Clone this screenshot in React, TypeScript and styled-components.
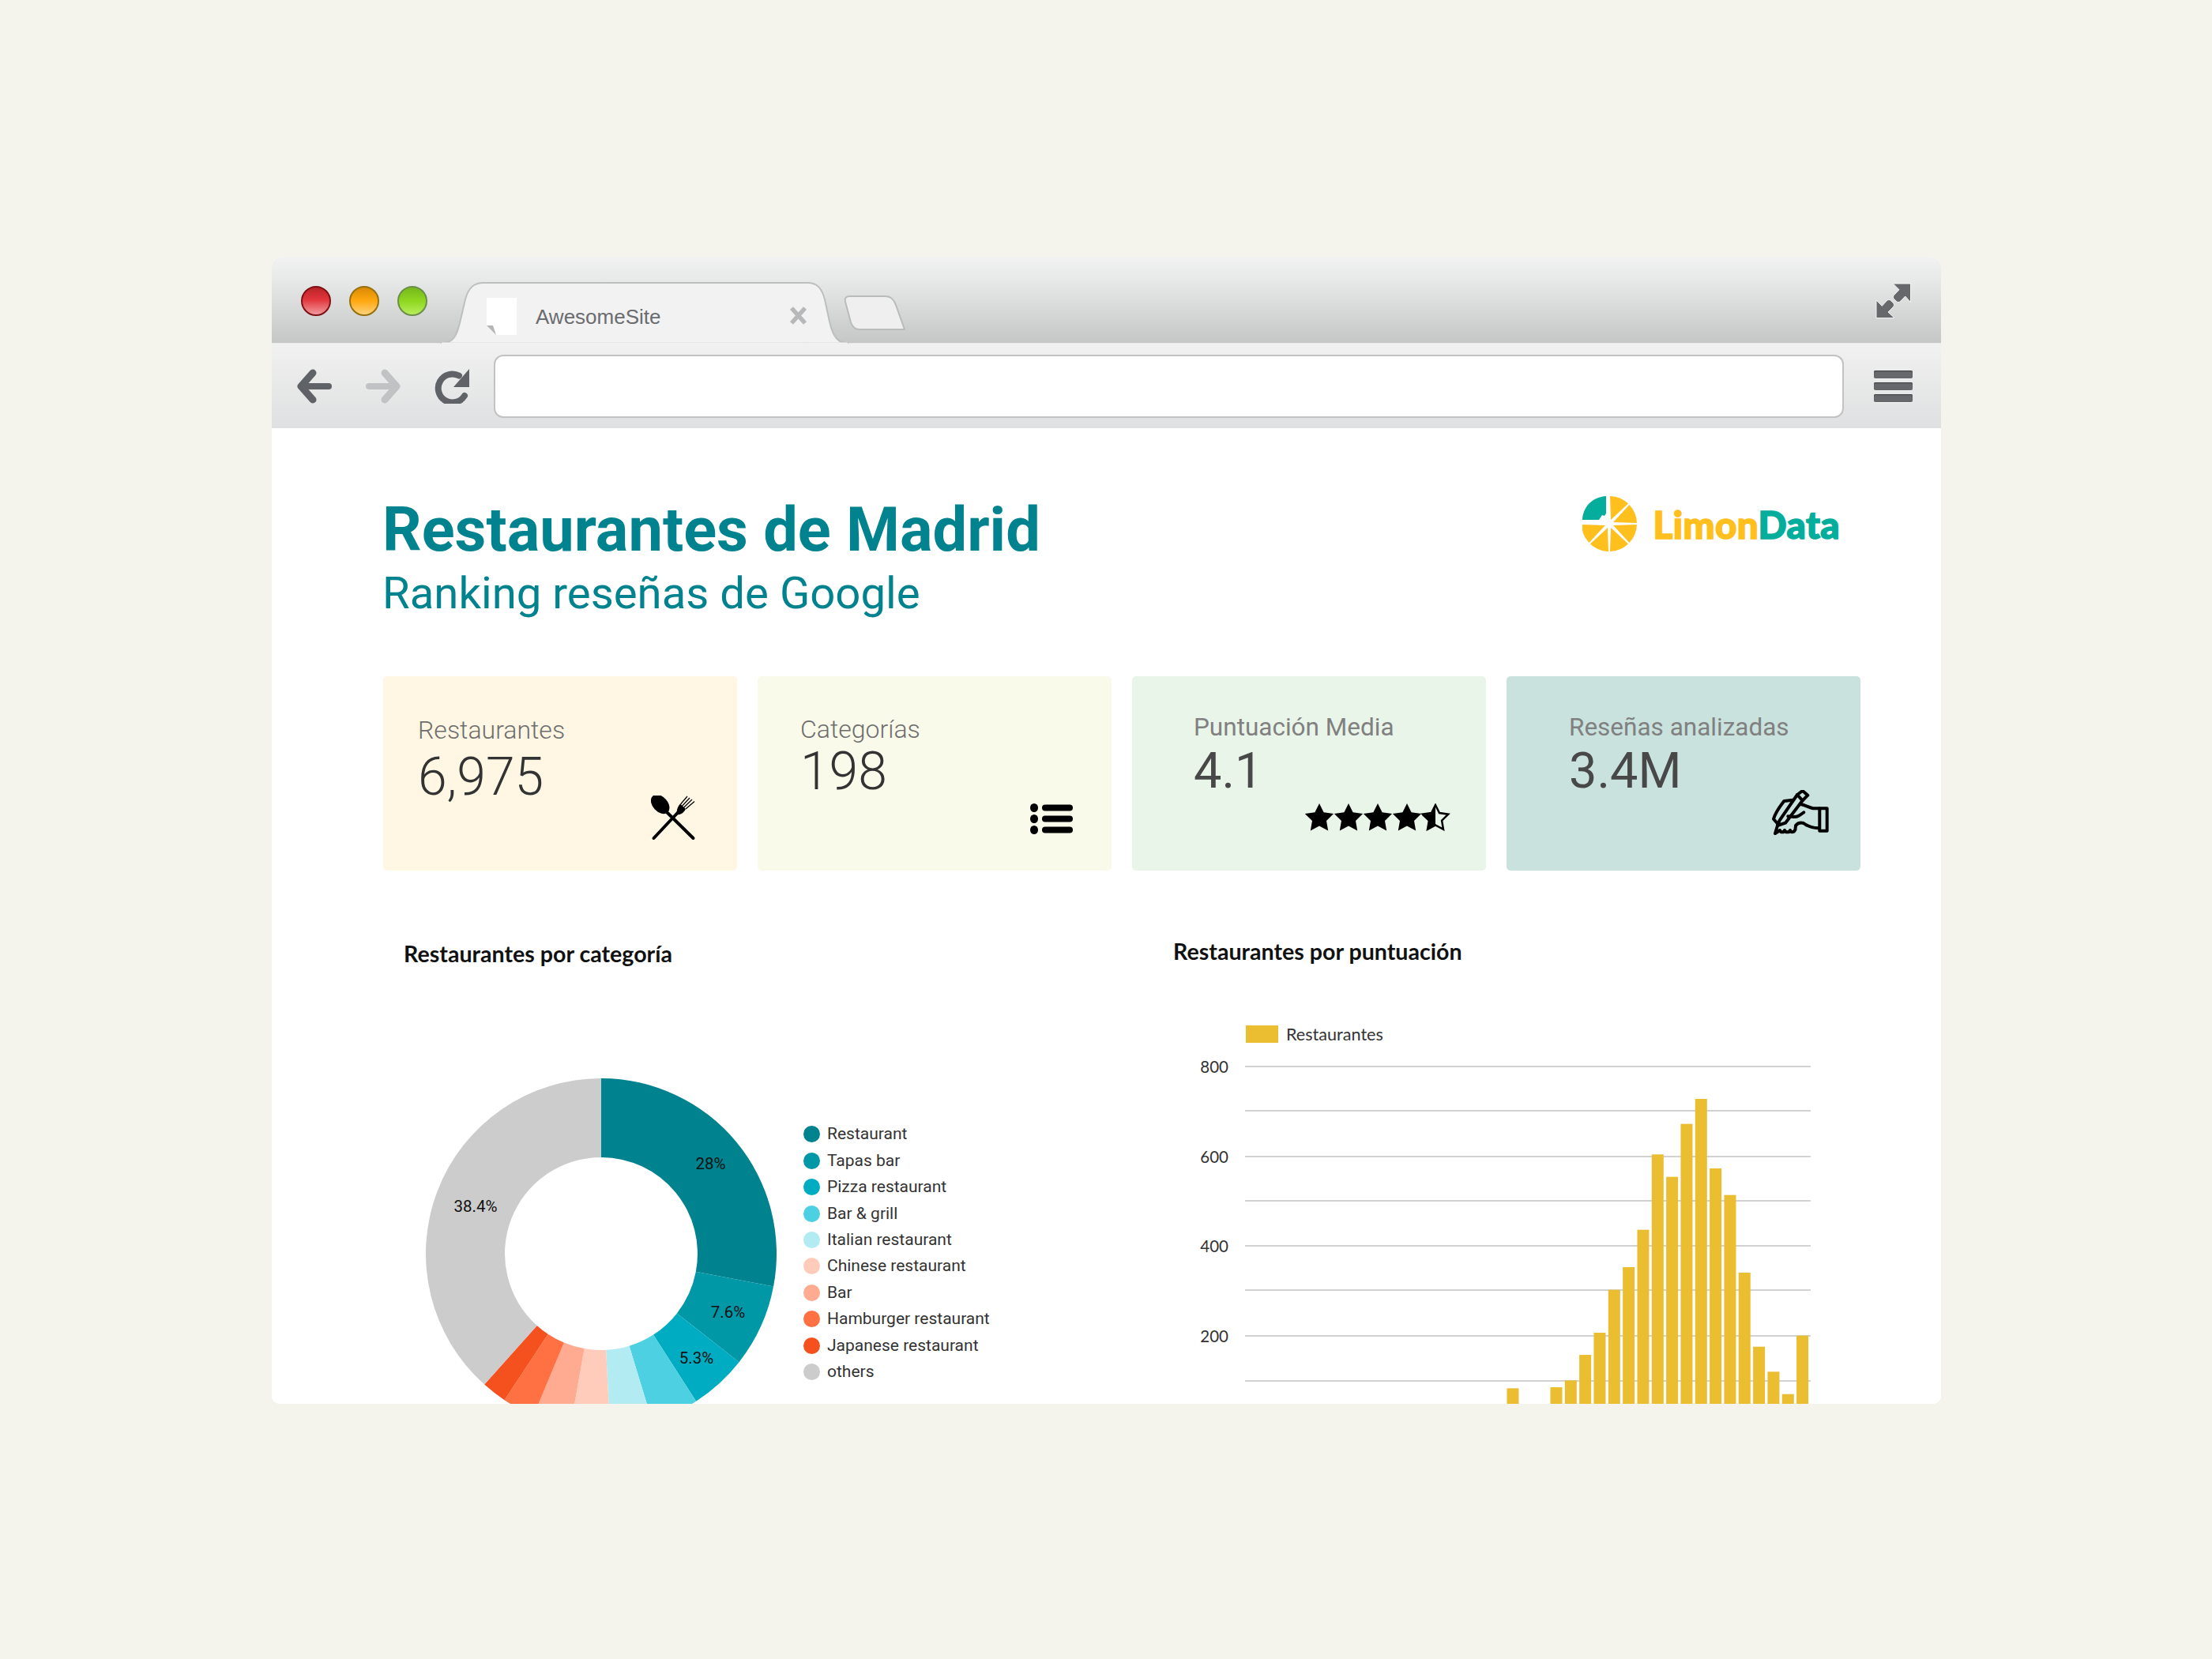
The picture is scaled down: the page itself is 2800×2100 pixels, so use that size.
import React from 'react';
import styled, { createGlobalStyle } from 'styled-components';

const Global = createGlobalStyle`
  html, body { margin: 0; padding: 0; background: #f4f4ec; }
  body { font-family: "Roboto", "Liberation Sans", sans-serif; }
`;

const Page = styled.div`
  width: 2800px;
  height: 2100px;
  padding-top: 325px;
  box-sizing: border-box;
  overflow: hidden;
`;
const Win = styled.div`
  width: 2113px;
  height: 1452px;
  margin-left: 344px;
  border-radius: 14px 14px 10px 10px;
  overflow: hidden;
  background: #fff;
  display: flex;
  flex-direction: column;
`;
const TitleBar = styled.div`
  height: 110px;
  flex: none;
  display: flex;
  align-items: flex-end;
  padding: 0 37px;
  background: linear-gradient(#f2f2f2, #e6e7e7 30%, #c5c7c7);
  border-bottom: 1px solid #e9e9e9;
  box-sizing: border-box;
`;
const Lights = styled.div`
  display: flex;
  gap: 23px;
  align-self: flex-start;
  margin-top: 37px;
`;
const colours = {
  red: { fill: 'linear-gradient(#b8242a, #e2363c 45%, #f09a9d)', rim: '#7f1015' },
  amber: { fill: 'linear-gradient(#d98a05, #ffa811 50%, #ffd27a)', rim: '#96700f' },
  green: { fill: 'linear-gradient(#76b81c, #8ed71f 50%, #b8ee5a)', rim: '#6c8e4a' },
};
const Light = styled.span<{ $c: keyof typeof colours }>`
  width: 38px;
  height: 38px;
  box-sizing: border-box;
  border-radius: 50%;
  background: ${(p) => colours[p.$c].fill};
  border: 2px solid ${(p) => colours[p.$c].rim};
`;
const Tab = styled.div`
  position: relative;
  width: 516px;
  height: 78px;
  margin-left: 17px;
  margin-bottom: -1px;
  flex: none;
  display: flex;
  align-items: center;
  color: #6a6c6f;
`;
const TabShape = styled.svg`
  position: absolute;
  inset: 0;
`;
const Favicon = styled.svg`
  position: relative;
  margin-left: 58px;
  margin-top: 9px;
  flex: none;
`;
const TabLabel = styled.span`
  position: relative;
  margin-left: 24px;
  margin-top: 11px;
  font: 400 26px "Liberation Sans", sans-serif;
`;
const TabClose = styled.svg`
  position: relative;
  margin-left: auto;
  margin-right: 52px;
  margin-top: 6px;
`;
const NewTab = styled.svg`
  flex: none;
  margin-left: -6px;
  margin-bottom: 16px;
`;
const Spacer = styled.div`
  flex: 1;
`;
const Expand = styled.svg`
  flex: none;
  align-self: flex-start;
  margin-top: 33px;
`;
const ToolBar = styled.div`
  height: 107px;
  flex: none;
  display: flex;
  align-items: center;
  padding: 0 36px 0 32px;
  box-sizing: border-box;
  background: linear-gradient(#f1f1f1, #dfe0e1);
`;
const NavIcon = styled.svg<{ $ml: number }>`
  flex: none;
  margin-left: ${(p) => p.$ml}px;
`;
const Address = styled.div`
  height: 80px;
  flex: 1;
  margin: 0 38px 0 31px;
  box-sizing: border-box;
  background: #fff;
  border: 2px solid #c2c2c2;
  border-radius: 12px;
`;
const Burger = styled.div`
  width: 49px;
  flex: none;
  display: flex;
  flex-direction: column;
  gap: 5px;
`;
const BurgerBar = styled.span`
  height: 10px;
  border-radius: 2px;
  background: #66686c;
  box-shadow: inset 0 1px 1px #3d3f42, 0 1px 0 #f5f5f5;
`;
const Content = styled.main`
  flex: 1;
  overflow: hidden;
  padding: 0 102px 0 141px;
  background: #fff;
`;
const Header = styled.header`
  height: 314px;
  display: flex;
  justify-content: space-between;
  align-items: flex-start;
`;
const Titles = styled.div`
  padding-top: 85px;
  margin-left: -1px;
`;
const H1 = styled.h1`
  margin: 0;
  font: 700 77.6px/88px "Roboto", sans-serif;
  color: #00838f;
`;
const H2 = styled.h2`
  margin: 0;
  font: 400 56.3px/73px "Roboto", sans-serif;
  color: #00838f;
`;
const Logo = styled.div`
  display: flex;
  align-items: center;
  gap: 19px;
  margin-top: 86px;
  margin-right: 26px;
`;
const LogoText = styled.span`
  font: 900 47.5px/60px "Lato", sans-serif;
  -webkit-text-stroke: 1.6px currentColor;
  letter-spacing: 0.4px;
`;
const Yellow = styled.span`
  color: #ffc01e;
`;
const Teal = styled.span`
  color: #05ae9c;
`;
const Cards = styled.section`
  display: grid;
  grid-template-columns: repeat(4, 448px);
  column-gap: 26px;
`;
const Card = styled.div<{ $bg: string; $pt: number; $pl: number; $pr: number }>`
  height: 246px;
  box-sizing: border-box;
  border-radius: 5px;
  background: ${(p) => p.$bg};
  padding: ${(p) => `${p.$pt}px ${p.$pr}px 0 ${p.$pl}px`};
  display: flex;
  flex-direction: column;
`;
const CardLabel = styled.div<{ $size: number; $w: number }>`
  font-family: "Roboto", sans-serif;
  font-weight: ${(p) => p.$w};
  font-size: ${(p) => p.$size}px;
  line-height: 42px;
  color: ${(p) => (p.$w === 300 ? '#6e6e6e' : '#808080')};
`;
const CardValue = styled.div<{ $size: number; $lh: number; $w: number }>`
  font-family: "Roboto", sans-serif;
  font-weight: ${(p) => p.$w};
  font-size: ${(p) => p.$size}px;
  line-height: ${(p) => p.$lh}px;
  color: ${(p) => (p.$w === 300 ? '#333' : '#484848')};
`;
const CardIcon = styled.svg<{ $mt: number }>`
  margin-top: ${(p) => p.$mt}px;
  align-self: flex-end;
  flex: none;
`;
const Charts = styled.section`
  display: grid;
  grid-template-columns: 1000px 1fr;
  margin-top: 90px;
`;
const Panel = styled.div<{ $pl: number; $mt: number }>`
  padding-left: ${(p) => p.$pl}px;
  margin-top: ${(p) => p.$mt}px;
`;
const ChartTitle = styled.h3`
  margin: 0;
  font: 700 28.6px/30px "Lato", sans-serif;
  color: #111;
`;
const DonutRow = styled.div`
  display: flex;
  align-items: flex-start;
  margin-top: 143px;
  padding-left: 28px;
`;
const Legend = styled.ul`
  list-style: none;
  margin: 54px 0 0 34px;
  padding: 0;
`;
const LegendItem = styled.li`
  height: 33.45px;
  display: flex;
  align-items: center;
  gap: 9px;
  font: 400 21px/1 "Roboto", sans-serif;
  color: #333;
`;
const Dot = styled.span<{ $c: string }>`
  width: 21px;
  height: 21px;
  border-radius: 50%;
  background: ${(p) => p.$c};
  flex: none;
`;
const BarSvg = styled.svg`
  display: block;
  margin-top: 70px;
`;
const Label = styled.text`
  font: 400 20.5px "Roboto", sans-serif;
  fill: #111;
`;
const Axis = styled.text<{ $size: number }>`
  font-family: "Lato", sans-serif;
  font-size: ${(p) => p.$size}px;
  fill: #333;
`;

const polar = (r: number, a: number, cx = 0, cy = 0) => {
  const t = ((a - 90) * Math.PI) / 180;
  return [cx + r * Math.cos(t), cy + r * Math.sin(t)];
};
const ringPath = (R: number, r: number, a0: number, a1: number) => {
  const [x0, y0] = polar(R, a0);
  const [x1, y1] = polar(R, a1);
  const [x2, y2] = polar(r, a1);
  const [x3, y3] = polar(r, a0);
  const big = a1 - a0 > 180 ? 1 : 0;
  return `M${x0} ${y0}A${R} ${R} 0 ${big} 1 ${x1} ${y1}L${x2} ${y2}A${r} ${r} 0 ${big} 0 ${x3} ${y3}Z`;
};

const slices: [string, string, number][] = [
  ['Restaurant', '#00838f', 28],
  ['Tapas bar', '#0097a7', 7.6],
  ['Pizza restaurant', '#00acc1', 5.3],
  ['Bar & grill', '#4dd0e1', 4.4],
  ['Italian restaurant', '#b2ebf2', 3.9],
  ['Chinese restaurant', '#ffccbc', 3.6],
  ['Bar', '#ffab91', 3.5],
  ['Hamburger restaurant', '#ff7043', 3],
  ['Japanese restaurant', '#f4511e', 2.3],
  ['others', '#cccccc', 38.4],
];

function Donut() {
  let acc = 0;
  return (
    <svg width={444} height={444} viewBox="-222 -222 444 444" style={{ flex: 'none', overflow: 'visible' }}>
      {slices.map(([n, c, v]) => {
        const a0 = (acc / 100) * 360;
        acc += v;
        return <path key={n} d={ringPath(222, 122, a0, (acc / 100) * 360)} fill={c} />;
      })}
      <Label x={138.5} y={-107} textAnchor="middle">28%</Label>
      <Label x={160.5} y={81} textAnchor="middle">7.6%</Label>
      <Label x={120.5} y={139} textAnchor="middle">5.3%</Label>
      <Label x={-159} y={-53} textAnchor="middle">38.4%</Label>
    </svg>
  );
}

const bars: [number, number][] = [
  [0, 1432], [3, 1428], [4, 1402], [5, 1305], [6, 1221], [7, 1058], [8, 972], [9, 830], [10, 544], [11, 629],
  [12, 428], [13, 333], [14, 597], [15, 698], [16, 993], [17, 1274], [18, 1369], [19, 1454], [20, 1232],
];
const gridY = [1351, 1407, 1465, 1521, 1578, 1634, 1692, 1749];

function BarChart() {
  return (
    <BarSvg width={830} height={520} viewBox="1486 1290 830 520">
      <rect x={1578} y={1299} width={41} height={22} fill="#ebbd30" />
      <Axis $size={21.6} x={1629} y={1318}>Restaurantes</Axis>
      {gridY.map((y) => (
        <line key={y} x1={1577} x2={2293} y1={y} y2={y} stroke="#d2d2d2" strokeWidth={2} />
      ))}
      {[[800, 1351], [600, 1465], [400, 1578], [200, 1692]].map(([t, y]) => (
        <Axis $size={20.5} key={t} x={1556} y={y + 8} textAnchor="end">{t}</Axis>
      ))}
      {bars.map(([i, top]) => (
        <rect key={i} x={1908.5 + i * 18.33} y={1281 + top / 3} width={15} height={560} fill="#ebbd30" />
      ))}
    </BarSvg>
  );
}

function LogoIcon() {
  const w = [0, 45, 90, 135, 180, 225];
  const cx = 34, cy = 35;
  const sector = (a0: number, a1: number) => {
    const [x0, y0] = polar(35, a0 + 1.6, cx, cy);
    const [x1, y1] = polar(35, a1 - 1.6, cx, cy);
    const [mx, my] = polar(5.5, (a0 + a1) / 2, cx, cy);
    return `M${mx} ${my}L${x0} ${y0}A35 35 0 0 1 ${x1} ${y1}Z`;
  };
  return (
    <svg width={71} height={71} viewBox="0 0 71 71">
      {w.map((a) => (
        <path key={a} d={sector(a, a + 45)} fill="#ffc01e" />
      ))}
      <path d="M30 0 V22 L28 25 L25 24 L21 30 H0 C1 13 13 1 30 0Z" fill="#05ae9c" />
    </svg>
  );
}

const star = (cx: number, cy: number, R: number) => {
  const p: string[] = [];
  for (let i = 0; i < 10; i++) {
    const r = i % 2 ? R * 0.5 : R;
    const [x, y] = polar(r, i * 36, cx, cy);
    p.push(`${x.toFixed(1)},${y.toFixed(1)}`);
  }
  return p.join(' ');
};

export default function App() {
  return (
    <>
      <Global />
      <Page>
        <Win>
          <TitleBar>
            <Lights>
              <Light $c="red" />
              <Light $c="amber" />
              <Light $c="green" />
            </Lights>
            <Tab>
              <TabShape width={516} height={78} viewBox="0 0 516 78">
                <path
                  d="M0 77.5 C16 77.5 20 68 24 52 L31 22 C35 7 42 1 54 1 L464 1 C476 1 482 7 486 22 L492 50 C496 68 502 77.5 516 77.5 Z"
                  fill="#f2f2f2"
                  stroke="#bdbfbf"
                  strokeWidth={2}
                />
                <path d="M1 78 H515" stroke="#f2f2f2" strokeWidth={3} />
              </TabShape>
              <Favicon width={38} height={47} viewBox="0 0 38 47">
                <path d="M0 0H38V47H12L0 35Z" fill="#fff" />
                <path d="M0 35H8L12 47Z" fill="#b5b5b5" />
              </Favicon>
              <TabLabel>AwesomeSite</TabLabel>
              <TabClose width={23} height={23} viewBox="0 0 23 23">
                <path d="M3 2L20 21M20 2L3 21" stroke="#b7b8b9" strokeWidth={5.5} />
              </TabClose>
            </Tab>
            <NewTab width={78} height={44} viewBox="0 0 78 44">
              <path
                d="M2 8 C1 3 3 1 8 1 L52 1 C60 1 63 5 66 12 L77 43 L20 43 C14 43 11 40 9 34 Z"
                fill="#efefef"
                stroke="#b9bbbb"
                strokeWidth={2}
              />
            </NewTab>
            <Spacer />
            <Expand width={46} height={46} viewBox="0 0 46 46">
              <g fill="#66686c" stroke="#f4f4f4" strokeWidth={1}>
                <path d="M44.5 1V24.5L37.7 17L32 23C30 25 28 25 26 23L24 21C22 19 22 17 24 15L30 8.7L22.3 1Z" />
                <path d="M1 22V44.5H24L16 37L22 31C24 29 24 27 22 25L20 23C18 21 16 21 14 23L8.3 29.3Z" />
              </g>
            </Expand>
          </TitleBar>
          <ToolBar>
            <NavIcon $ml={0} width={44} height={44} viewBox="0 0 44 44">
              <path d="M20 5L5 22L20 39" fill="none" stroke="#5f6266" strokeWidth={9} strokeLinecap="round" strokeLinejoin="round" />
              <path d="M8 22H40" stroke="#5f6266" strokeWidth={8} strokeLinecap="round" />
            </NavIcon>
            <NavIcon $ml={43} width={44} height={44} viewBox="0 0 44 44">
              <path d="M24 5L39 22L24 39" fill="none" stroke="#c1c2c3" strokeWidth={9} strokeLinecap="round" strokeLinejoin="round" />
              <path d="M4 22H36" stroke="#c1c2c3" strokeWidth={8} strokeLinecap="round" />
            </NavIcon>
            <NavIcon $ml={43} width={44} height={44} viewBox="0 0 44 44">
              <path d="M31 8.5A18 18 0 1 0 38 34" fill="none" stroke="#5f6266" strokeWidth={8} strokeLinecap="round" />
              <path d="M44 0V23H24Z" fill="#5f6266" />
            </NavIcon>
            <Address />
            <Burger>
              <BurgerBar />
              <BurgerBar />
              <BurgerBar />
            </Burger>
          </ToolBar>
          <Content>
            <Header>
              <Titles>
                <H1>Restaurantes de Madrid</H1>
                <H2>Ranking reseñas de Google</H2>
              </Titles>
              <Logo>
                <LogoIcon />
                <LogoText>
                  <Yellow>Limon</Yellow>
                  <Teal>Data</Teal>
                </LogoText>
              </Logo>
            </Header>
            <Cards>
              <Card $bg="#fff7e3" $pt={47} $pl={44} $pr={51}>
                <CardLabel $size={32} $w={300}>Restaurantes</CardLabel>
                <CardValue $size={66} $lh={77} $w={300}>6,975</CardValue>
                <CardIcon $mt={-15} width={58} height={58} viewBox="0 0 58 58">
                  <ellipse cx={11.7} cy={11} rx={9.5} ry={14} transform="rotate(-42 11.7 11)" />
                  <path d="M20.5 21.5L53.5 54" stroke="#000" strokeWidth={4} strokeLinecap="round" />
                  <path d="M35 20.5L3.5 54" stroke="#000" strokeWidth={4} strokeLinecap="round" />
                  <path d="M33 24 C32 18 34 14 37 10.5 L44 17 C42 21 38 25 33 24Z" />
                  <path d="M37.5 11L46 1M39.7 13L49 3M41.8 15L52 5M44 17L55 7.5" stroke="#000" strokeWidth={1.3} />
                </CardIcon>
              </Card>
              <Card $bg="#f9faea" $pt={46} $pl={54} $pr={49}>
                <CardLabel $size={32} $w={300}>Categorías</CardLabel>
                <CardValue $size={66} $lh={66} $w={300}>198</CardValue>
                <CardIcon $mt={7} width={54} height={39} viewBox="0 0 54 39">
                  <ellipse cx={5} cy={5.5} rx={5} ry={5.5} />
                  <ellipse cx={5} cy={19.5} rx={5} ry={5.5} />
                  <ellipse cx={5} cy={33.5} rx={5} ry={5.5} />
                  <rect x={15} y={1.5} width={39} height={8} rx={4} />
                  <rect x={15} y={15.5} width={39} height={8} rx={4} />
                  <rect x={15} y={29.5} width={39} height={8} rx={4} />
                </CardIcon>
              </Card>
              <Card $bg="#eaf5ea" $pt={44} $pl={78} $pr={45}>
                <CardLabel $size={31.5} $w={400}>Puntuación Media</CardLabel>
                <CardValue $size={63} $lh={68} $w={400}>4.1</CardValue>
                <CardIcon $mt={7} width={184} height={35} viewBox="0 0 184 35">
                  <polygon points={star(18, 19, 19)} />
                  <polygon points={star(55, 19, 19)} />
                  <polygon points={star(92, 19, 19)} />
                  <polygon points={star(129, 19, 19)} />
                  <polygon points={star(165, 19, 17)} fill="none" stroke="#000" strokeWidth={2.5} />
                  <path d="M165 2 V28 L155 34 L157 23 L148 15 L160 13 Z" />
                </CardIcon>
              </Card>
              <Card $bg="#c9e2dd" $pt={44} $pl={79} $pr={40}>
                <CardLabel $size={31.5} $w={400}>Reseñas analizadas</CardLabel>
                <CardValue $size={63} $lh={68} $w={400}>3.4M</CardValue>
                <CardIcon $mt={-10} width={72} height={58} viewBox="0 0 72 58">
                  <g fill="none" stroke="#000" strokeWidth={4} strokeLinejoin="round" strokeLinecap="round">
                    <path d="M32 6L38.7 1L45.3 6.7L38.7 13.3Z" />
                    <path d="M32 6L9.7 38.3L7 45L17 41.7L38.7 13.3" />
                    <path d="M26.3 12.7L15.3 14C9 22 4 30 2 36.7L7.7 43.3" />
                    <path d="M37 18.3C42 19 46 22 52 23.3H60" />
                    <path d="M20.3 33.3C26 34 30 35 33.7 32.7C36 31.5 38 30 40.3 28.3" />
                    <path d="M7 45L4 55L10 51C11 54 15 54 16 51C17 54 22 54 23 51C24 54 28 54 29.5 50L30 45C33 41 36 41 40 42C45 46 52 48 59 48.3" />
                    <path d="M60.3 23.3H69.7V51.7H60.3Z" />
                  </g>
                </CardIcon>
              </Card>
            </Cards>
            <Charts>
              <Panel $pl={26} $mt={0}>
                <ChartTitle>Restaurantes por categoría</ChartTitle>
                <DonutRow>
                  <Donut />
                  <Legend>
                    {slices.map(([n, c]) => (
                      <LegendItem key={n}>
                        <Dot $c={c} />
                        {n}
                      </LegendItem>
                    ))}
                  </Legend>
                </DonutRow>
              </Panel>
              <Panel $pl={0} $mt={-3}>
                <ChartTitle>Restaurantes por puntuación</ChartTitle>
                <BarChart />
              </Panel>
            </Charts>
          </Content>
        </Win>
      </Page>
    </>
  );
}
